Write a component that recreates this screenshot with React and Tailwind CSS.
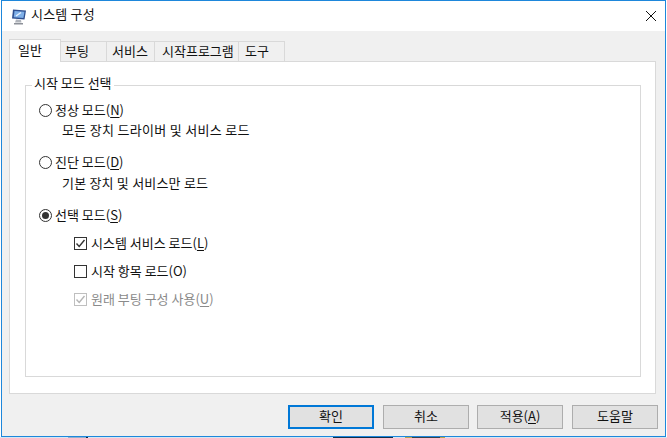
const F = { fontFamily: '"Noto Sans CJK KR", "Noto Sans", sans-serif' };

function Radio({ checked }) {
  return (
    <svg width="13" height="13" viewBox="0 0 13 13" className="shrink-0">
      <circle cx="6.5" cy="6.5" r="6" fill="#fff" stroke="#333" strokeWidth="1" />
      {checked && <circle cx="6.5" cy="6.5" r="3.5" fill="#333" />}
    </svg>
  );
}

function Check({ checked, disabled }) {
  const c = disabled ? "#bfbfbf" : "#333";
  return (
    <svg width="13" height="13" viewBox="0 0 13 13" className="shrink-0">
      <rect x="0.5" y="0.5" width="12" height="12" fill="#fff" stroke={c} />
      {checked && <path d="M2.5 6.5L5.2 9.5L10.5 3" fill="none" stroke={disabled ? "#b5b5b5" : "#333"} strokeWidth="1.4" />}
    </svg>
  );
}

function U({ children }) {
  return <span className="underline underline-offset-2">{children}</span>;
}

function Tab({ w, active, children }) {
  return active ? (
    <div className={`${w} h-[23px] bg-white border border-b-0 border-[#d9d9d9] flex items-center pl-[8px] pb-[4px] text-[13px] text-[#111] -mb-px relative`}>{children}</div>
  ) : (
    <div className={`${w} h-[20px] bg-[#f0f0f0] border border-l-0 border-b-0 border-[#d9d9d9] flex items-center pb-[2px] text-[13px] text-[#111]`}>{children}</div>
  );
}

function Btn({ children, primary, extra }) {
  return (
    <div className={`w-[86px] h-[24px] flex items-center justify-center pb-[3px] bg-[#e1e1e1] text-[13px] text-[#111] ${primary ? "border-2 border-[#0078d7]" : "border border-[#adadad]"} ${extra || ""}`}>
      {children}
    </div>
  );
}

export default function App() {
  return (
    <div className="w-[667px] h-[438px] bg-white overflow-hidden leading-none" style={F}>
      <div className="ml-[1px] w-[665px] h-[437px] border border-[#1e87db] flex flex-col bg-[#f0f0f0]">
        <div className="h-[30px] bg-white flex items-center shrink-0 pl-[9px]">
          <svg width="17" height="17" viewBox="0 0 17 17" className="shrink-0">
            <path d="M2 1.5L15 2.5L13.5 11.5L1 10.5Z" fill="#2f4f8f" />
            <path d="M3.5 3L13.5 3.8L12.4 10L2.7 9.2Z" fill="#7fb0e8" />
            <path d="M5 8L10 4.5" stroke="#e8f2ff" strokeWidth="1.5" />
            <path d="M5 11.5L10 12L10.5 14.5H4Z" fill="#b0b4bb" />
            <path d="M3 15H12V16.5H3Z" fill="#8d9199" />
          </svg>
          <span className="ml-[3px] pb-[5px] text-[13px] text-[#111] tracking-[0.2px]">시스템 구성</span>
          <svg width="10" height="10" viewBox="0 0 10 10" className="ml-auto mr-[9px]">
            <path d="M0 0L10 10M10 0L0 10" stroke="#111" strokeWidth="1" />
          </svg>
        </div>
        <div className="pl-[7px] pt-[8px] flex flex-col flex-1">
          <div className="flex items-end h-[22px] relative z-10">
            <Tab w="w-[52px]" active>일반</Tab>
            <Tab w="w-[46px] pl-[4px]">부팅</Tab>
            <Tab w="w-[48px] pl-[5px]">서비스</Tab>
            <Tab w="w-[84px] pl-[7px]">시작프로그램</Tab>
            <Tab w="w-[46px] pl-[6px]">도구</Tab>
          </div>
          <div className="w-[647px] h-[333px] bg-white border border-[#d9d9d9] pl-[15px] pr-[14px] pt-[23px]">
            <div className="relative w-[616px] h-[292px] border border-[#d9d9d9] pl-[13px] pt-[16px] text-[13px] text-[#111]">
              <span className="absolute -top-[10px] left-[6px] bg-white px-[2px] pb-[2px] text-[13px]">시작 모드 선택</span>
              <div className="flex items-center gap-[3px] h-[16px]"><Radio /><span className="pb-[1px]">정상 모드(<U>N</U>)</span></div>
              <div className="pl-[23px] mt-[3px] h-[16px] flex items-center tracking-[0.3px]">모든 장치 드라이버 및 서비스 로드</div>
              <div className="flex items-center gap-[3px] h-[16px] mt-[17px]"><Radio /><span className="pb-[1px]">진단 모드(<U>D</U>)</span></div>
              <div className="pl-[23px] mt-[4px] h-[16px] flex items-center tracking-[0.2px]">기본 장치 및 서비스만 로드</div>
              <div className="flex items-center gap-[3px] h-[16px] mt-[17px]"><Radio checked /><span className="pb-[1px]">선택 모드(<U>S</U>)</span></div>
              <div className="flex items-center gap-[4px] h-[16px] mt-[12px] pl-[35px]"><Check checked /><span className="pb-[1px]">시스템 서비스 로드(<U>L</U>)</span></div>
              <div className="flex items-center gap-[4px] h-[16px] mt-[12px] pl-[35px]"><Check /><span className="pb-[1px]">시작 항목 로드(O)</span></div>
              <div className="flex items-center gap-[4px] h-[16px] mt-[12px] pl-[35px] text-[#8a8a8a]"><Check checked disabled /><span className="pb-[1px]">원래 부팅 구성 사용(<U>U</U>)</span></div>
            </div>
          </div>
          <div className="flex gap-[9px] pl-[279px] pt-[11px]">
            <Btn primary>확인</Btn>
            <Btn>취소</Btn>
            <Btn extra="-ml-px">적용(<U>A</U>)</Btn>
            <Btn>도움말</Btn>
          </div>
        </div>
      </div>
      <div className="h-[1px] flex bg-[#d6e6f3]">
        <div className="w-[68px]" />
        <div className="w-[18px] bg-[#8fb0cf]" />
        <div className="w-[2px] bg-[#10203a]" />
        <div className="w-[245px]" />
        <div className="w-[60px] bg-[#0f2d4a]" />
        <div className="w-[12px]" />
        <div className="w-[7px] bg-[#b9a24a]" />
        <div className="w-[28px] bg-[#34404a]" />
        <div className="w-[5px] bg-[#b9a24a]" />
      </div>
    </div>
  );
}
